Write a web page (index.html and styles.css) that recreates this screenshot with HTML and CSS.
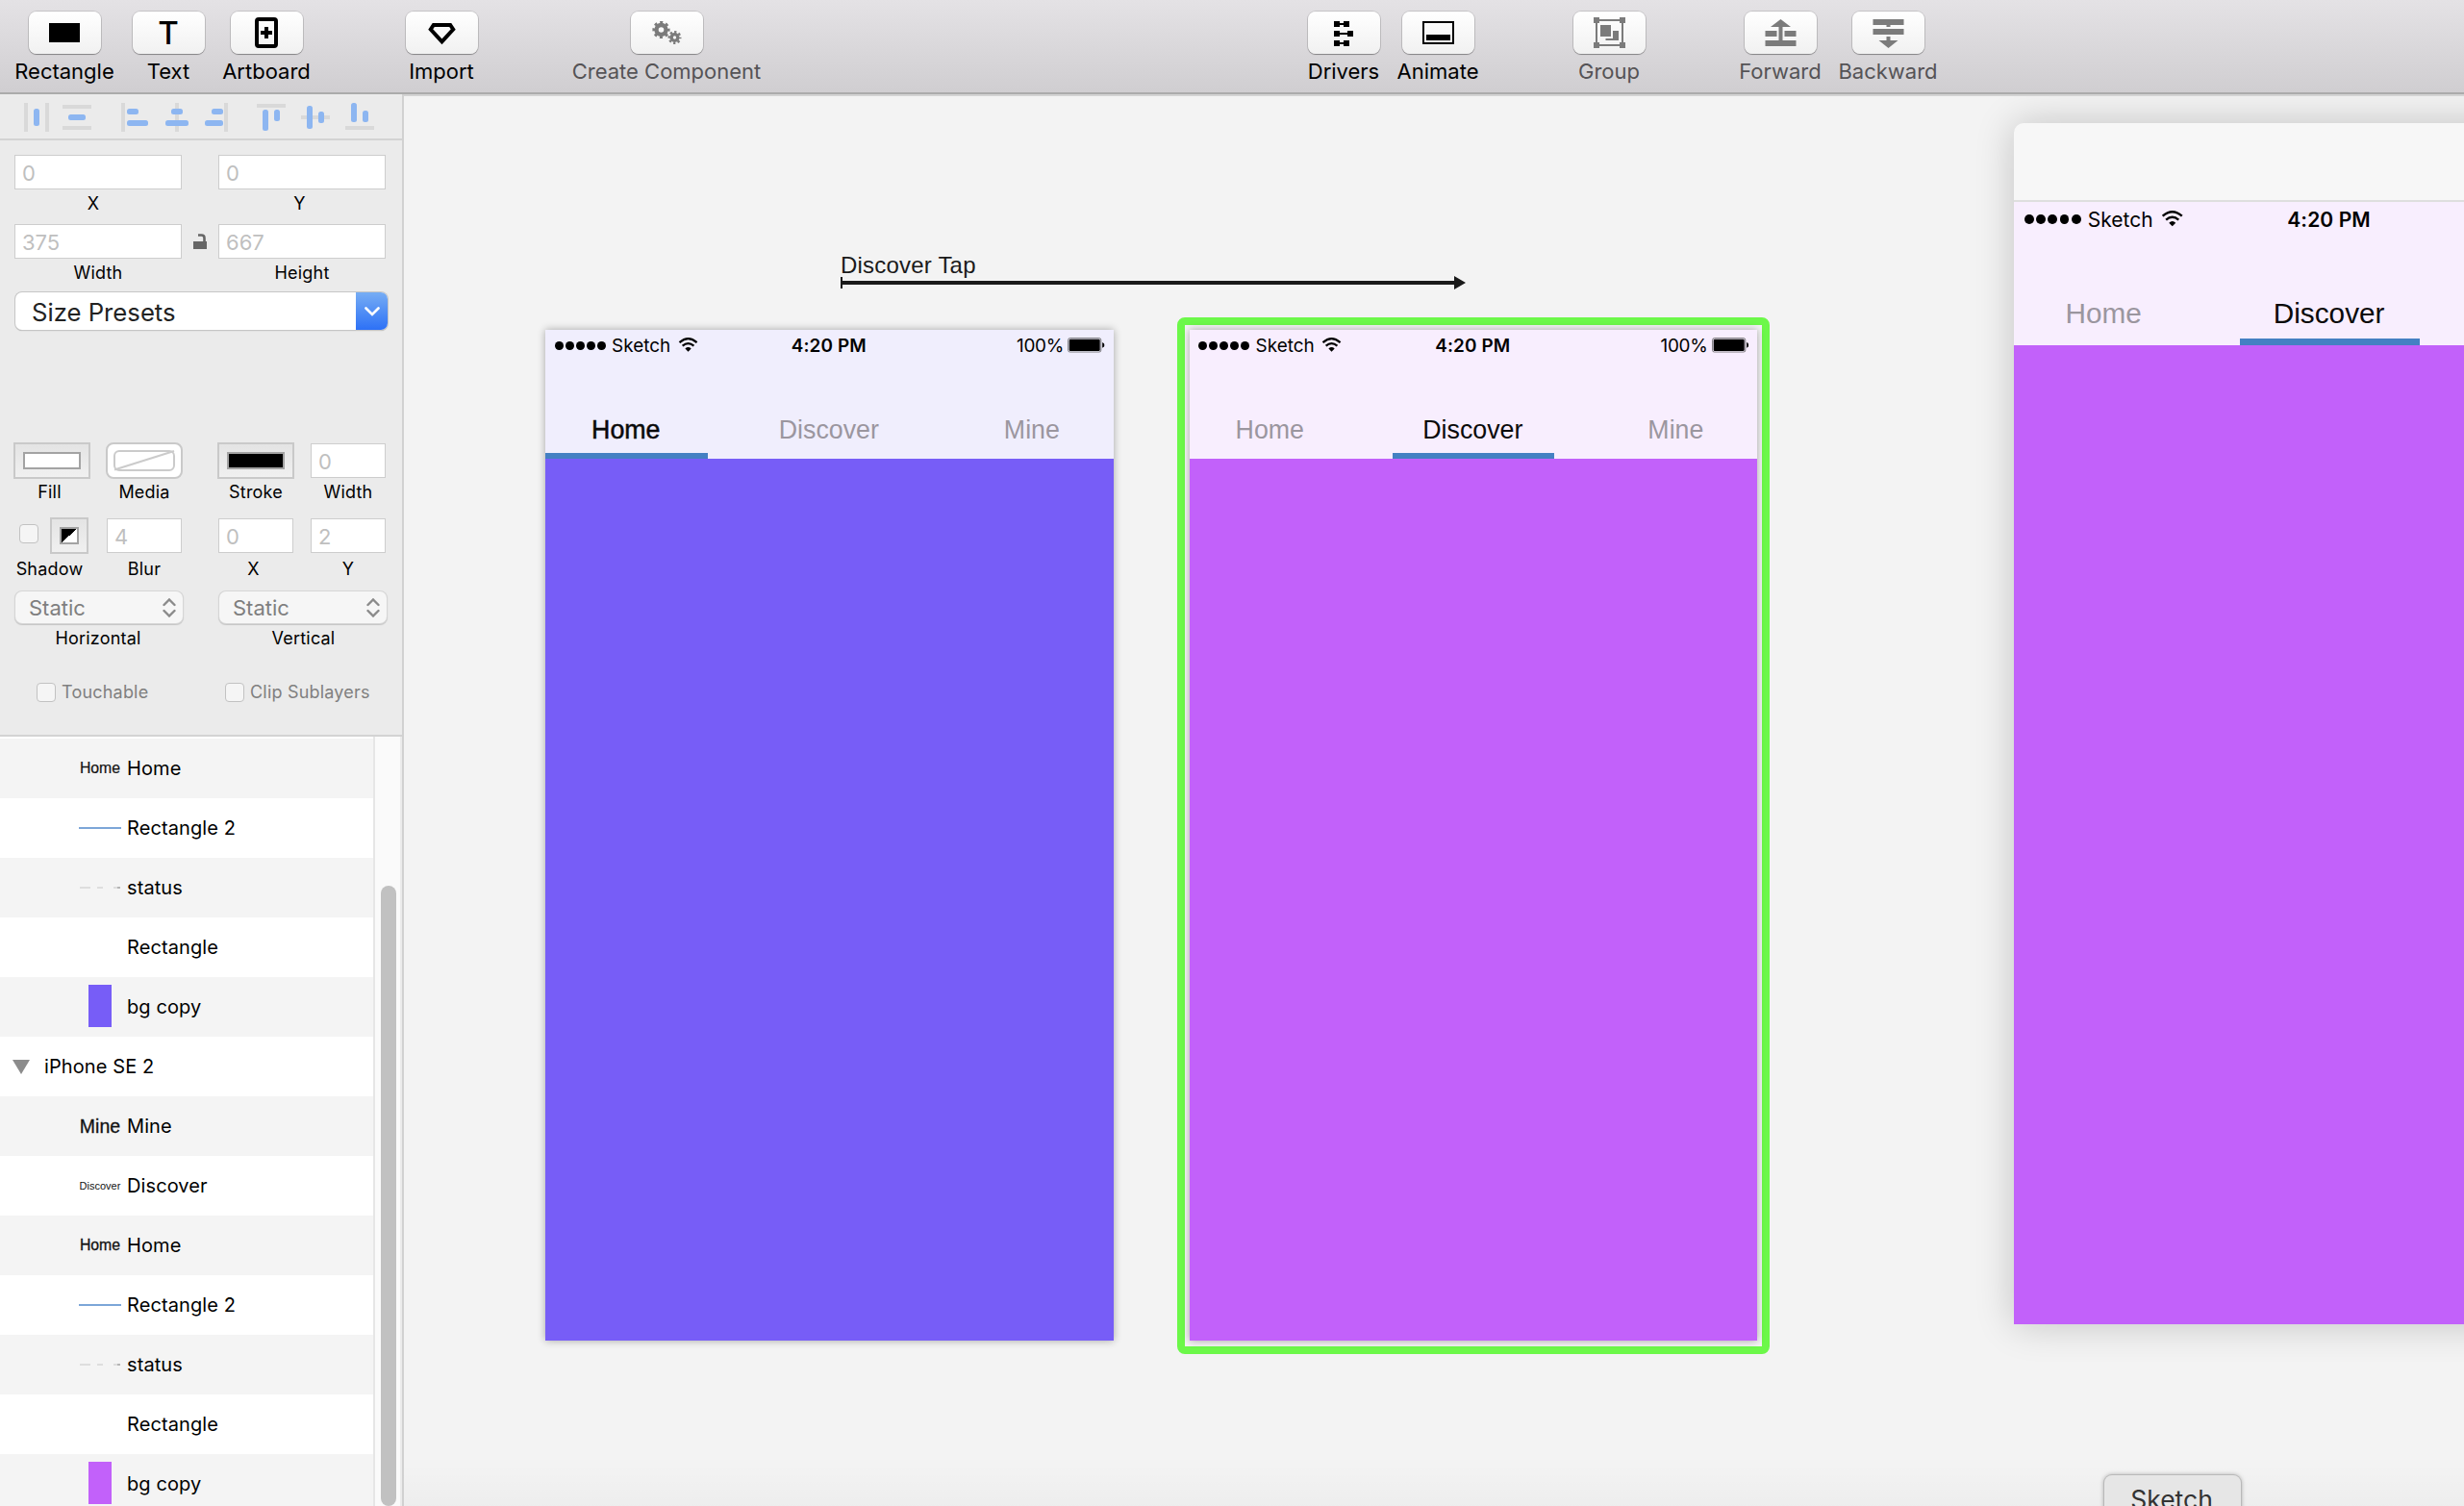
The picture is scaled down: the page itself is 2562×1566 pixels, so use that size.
FILE: index.html
```html
<!DOCTYPE html>
<html lang="en">
<head>
    <meta charset="UTF-8">
    <meta name="viewport" content="width=device-width, initial-scale=1.0">
    <title>Discover Tap</title>
    <link rel="stylesheet" href="styles.css">
</head>
<body>
    <svg width="0" height="0" class="defs">
        <symbol id="wifi" viewBox="0 0 26 19">
            <path d="M1.5 6.5 Q13 -3.5 24.5 6.5" fill="none" stroke="#000" stroke-width="2.8"/>
            <path d="M5.5 11 Q13 4.5 20.5 11" fill="none" stroke="#000" stroke-width="2.8"/>
            <path d="M9 14.5 Q13 10.8 17 14.5 L13 18.6 Z"/>
        </symbol>
        <symbol id="battery" viewBox="0 0 49 20">
            <rect x="0.8" y="0.8" width="43.4" height="18.4" rx="2.5" fill="none" stroke="#555" stroke-width="1"/>
            <rect x="2.2" y="2.2" width="40.6" height="15.6" rx="1.5"/>
            <path d="M46 6.5 Q49 8 49 10 Q49 12 46 13.5 Z"/>
        </symbol>
    </svg>

    <header class="toolbar">
        <div class="tool-group">
            <div class="tool tool-rectangle">
                <button class="tool-btn"><svg viewBox="0 0 75 44"><rect x="21" y="12" width="32" height="20"/></svg></button>
                <span class="tool-label">Rectangle</span>
            </div>
            <div class="tool">
                <button class="tool-btn tool-btn-text">T</button>
                <span class="tool-label">Text</span>
            </div>
            <div class="tool tool-artboard">
                <button class="tool-btn"><svg viewBox="0 0 75 44"><rect x="27" y="8" width="20" height="28" rx="2" fill="none" stroke="#000" stroke-width="4"/><path d="M35 16h4v4h4v4h-4v4h-4v-4h-4v-4h4z"/></svg></button>
                <span class="tool-label">Artboard</span>
            </div>
        </div>
        <div class="tool-group">
            <div class="tool">
                <button class="tool-btn"><svg viewBox="0 0 75 44"><path d="M28.8 14h17.4l3 4.5L37.5 31.3 25.8 18.5z" fill="none" stroke="#000" stroke-width="4"/></svg></button>
                <span class="tool-label">Import</span>
            </div>
        </div>
        <div class="tool-group tool-group-component">
            <div class="tool tool-component disabled">
                <button class="tool-btn">
                    <svg viewBox="0 0 75 44" fill="none" stroke="#7b7b7b">
                        <circle cx="31.5" cy="19" r="5" stroke-width="4.4"/>
                        <circle cx="31.5" cy="19" r="7.7" stroke-width="2.8" stroke-dasharray="3.02" stroke-dashoffset="1.5"/>
                        <circle cx="45.5" cy="27" r="3.4" stroke-width="3.4"/>
                        <circle cx="45.5" cy="27" r="5.8" stroke-width="2.4" stroke-dasharray="2.28" stroke-dashoffset="1.1"/>
                    </svg>
                </button>
                <span class="tool-label">Create Component</span>
            </div>
        </div>
        <div class="tool-group tool-group-right">
            <div class="tool">
                <button class="tool-btn"><svg viewBox="0 0 75 44"><path d="M27 10h6v6h-6zM37 10h6v6h-6zM33 12h4v2h-4zM27 20h6v6h-6zM41 20h6v6h-6zM33 22h8v2h-8zM27 30h6v6h-6zM37 30h6v6h-6zM33 32h4v2h-4z"/></svg></button>
                <span class="tool-label">Drivers</span>
            </div>
            <div class="tool tool-animate">
                <button class="tool-btn"><svg viewBox="0 0 75 44"><rect x="22" y="11" width="31" height="22" fill="none" stroke="#000" stroke-width="2"/><rect x="25" y="24" width="25" height="6"/></svg></button>
                <span class="tool-label">Animate</span>
            </div>
        </div>
        <div class="tool-group">
            <div class="tool disabled">
                <button class="tool-btn"><svg viewBox="0 0 75 44" fill="#7b7b7b"><path d="M21 6h6v6h-6zM48 6h6v6h-6zM21 32h6v6h-6zM48 32h6v6h-6zM27 8h21v2H27zM27 34h21v2H27zM23 12h2v20h-2zM50 12h2v20h-2zM28 14h11v12H28zM41 20h6v10H33.5v-2H41z"/></svg></button>
                <span class="tool-label">Group</span>
            </div>
        </div>
        <div class="tool-group">
            <div class="tool tool-animate disabled">
                <button class="tool-btn"><svg viewBox="0 0 75 44" fill="#7b7b7b"><path d="M37.5 8L48 16h-8.500v14h14v6h-32v-6h14V16H27zM21.500 20h12v6h-12zM41.500 20h12v6h-12z"/></svg></button>
                <span class="tool-label">Forward</span>
            </div>
            <div class="tool tool-rectangle disabled">
                <button class="tool-btn"><svg viewBox="0 0 75 44" fill="#7b7b7b"><path d="M21.500 8h32v6h-14v2h-4v-2h-14zM21.500 18h32v6h-32zM35.500 26h4v4h8l-10 8-10-8h8z"/></svg></button>
                <span class="tool-label">Backward</span>
            </div>
        </div>
    </header>

    <main class="workspace">
        <aside class="sidebar">
            <div class="align-bar">
                <svg width="418" height="46" viewBox="0 98 418 46">
                    <path fill="#d9d9d9" d="M25 107h4v30h-4zM47 107h4v30h-4zM65 109h30v4H65zM65 131h30v4H65zM126 107h4v30h-4zM182 107h4v30h-4zM233 107h4v30h-4zM267 108h30v4h-30zM313 120h30v4h-30zM359 131h30v4h-30z"/>
                    <g fill="#8db6f1">
                        <rect x="35" y="113" width="6" height="18" rx="2.5"/>
                        <rect x="71" y="119" width="18" height="6" rx="2.5"/>
                        <rect x="132" y="113" width="12" height="6" rx="2.5"/>
                        <rect x="132" y="125" width="22" height="6" rx="2.5"/>
                        <rect x="178" y="113" width="12" height="6" rx="2.5"/>
                        <rect x="172" y="125" width="24" height="6" rx="2.5"/>
                        <rect x="220" y="113" width="12" height="6" rx="2.5"/>
                        <rect x="213" y="125" width="19" height="6" rx="2.5"/>
                        <rect x="273" y="114" width="6" height="22" rx="2.5"/>
                        <rect x="285" y="114" width="6" height="12" rx="2.5"/>
                        <rect x="319" y="110" width="6" height="24" rx="2.5"/>
                        <rect x="331" y="116" width="6" height="12" rx="2.5"/>
                        <rect x="365" y="107" width="6" height="20" rx="2.5"/>
                        <rect x="377" y="115" width="6" height="12" rx="2.5"/>
                    </g>
                </svg>
            </div>

            <div class="inspector">
                <div class="row row-position">
                    <div class="col col-wide"><div class="field">0</div><span class="label label-x">X</span></div>
                    <div class="col col-wide"><div class="field">0</div><span class="label label-fill">Y</span></div>
                </div>
                <div class="row row-size">
                    <div class="col col-wide"><div class="field">375</div><span class="label">Width</span></div>
                    <svg class="lock" width="14" height="16" viewBox="0 0 14 16"><rect y="8" width="14" height="8" fill="#666"/><path d="M5 1.5h3.500q3 0 3 3V8" fill="none" stroke="#666" stroke-width="2.6"/></svg>
                    <div class="col col-wide"><div class="field">667</div><span class="label">Height</span></div>
                </div>
                <div class="combo">
                    <span class="combo-text">Size Presets</span>
                    <span class="combo-btn"><svg width="16" height="10" viewBox="0 0 16 10"><path d="M1.5 1.5L8 8l6.500-6.500" fill="none" stroke="#fff" stroke-width="2.6" stroke-linecap="round"/></svg></span>
                </div>
                <div class="row row-fill">
                    <div class="pair">
                        <div class="col"><div class="well"><span class="swatch"></span></div><span class="label label-fill">Fill</span></div>
                        <div class="col">
                            <div class="well well-media"><svg width="64" height="22" viewBox="0 0 64 22"><rect x="1" y="1" width="62" height="20" rx="5" fill="#fff" stroke="#cbcbcb" stroke-width="2"/><path d="M1 20.500L63 1" stroke="#cbcbcb" stroke-width="2"/></svg></div>
                            <span class="label">Media</span>
                        </div>
                    </div>
                    <div class="pair">
                        <div class="col"><div class="well"><span class="swatch swatch-black"></span></div><span class="label">Stroke</span></div>
                        <div class="col"><div class="field field-small">0</div><span class="label">Width</span></div>
                    </div>
                </div>
                <div class="row row-shadow">
                    <div class="pair">
                        <div class="col">
                            <div class="shadow-controls">
                                <span class="checkbox"></span>
                                <div class="well well-small"><span class="swatch swatch-split"></span></div>
                            </div>
                            <span class="label label-fill">Shadow</span>
                        </div>
                        <div class="col"><div class="field field-small">4</div><span class="label">Blur</span></div>
                    </div>
                    <div class="pair">
                        <div class="col"><div class="field field-small">0</div><span class="label label-fill">X</span></div>
                        <div class="col"><div class="field field-small">2</div><span class="label">Y</span></div>
                    </div>
                </div>
                <div class="row row-layout">
                    <div class="col col-wide">
                        <div class="select">Static<svg width="14" height="20" viewBox="0 0 14 20"><path d="M1.5 7L7 1.5 12.5 7M1.5 13L7 18.5 12.5 13" fill="none" stroke="#8a8a8a" stroke-width="2.4" stroke-linecap="round"/></svg></div>
                        <span class="label">Horizontal</span>
                    </div>
                    <div class="col col-wide">
                        <div class="select">Static<svg width="14" height="20" viewBox="0 0 14 20"><path d="M1.5 7L7 1.5 12.5 7M1.5 13L7 18.5 12.5 13" fill="none" stroke="#8a8a8a" stroke-width="2.4" stroke-linecap="round"/></svg></div>
                        <span class="label label-vertical">Vertical</span>
                    </div>
                </div>
                <div class="checks">
                    <div class="check check-touch"><span class="checkbox"></span><span>Touchable</span></div>
                    <div class="check"><span class="checkbox"></span><span>Clip Sublayers</span></div>
                </div>
            </div>

            <div class="layers">
                <ul class="layer-list">
                    <li class="layer"><span class="thumb thumb-home">Home</span>Home</li>
                    <li class="layer"><span class="thumb"><i class="thumb-line"></i></span>Rectangle 2</li>
                    <li class="layer"><span class="thumb"><i class="thumb-status"></i></span>status</li>
                    <li class="layer"><span class="thumb"></span>Rectangle</li>
                    <li class="layer"><span class="thumb"><i class="thumb-bg"></i></span>bg copy</li>
                    <li class="layer layer-parent"><i class="triangle"></i>iPhone SE 2</li>
                    <li class="layer"><span class="thumb thumb-mine">Mine</span>Mine</li>
                    <li class="layer"><span class="thumb thumb-discover">Discover</span>Discover</li>
                    <li class="layer"><span class="thumb thumb-home thumb-bold">Home</span>Home</li>
                    <li class="layer"><span class="thumb"><i class="thumb-line"></i></span>Rectangle 2</li>
                    <li class="layer"><span class="thumb"><i class="thumb-status"></i></span>status</li>
                    <li class="layer"><span class="thumb"></span>Rectangle</li>
                    <li class="layer"><span class="thumb"><i class="thumb-bg thumb-bg-pink"></i></span>bg copy</li>
                </ul>
                <div class="scrollbar"><div class="scroll-thumb"></div></div>
            </div>
        </aside>

        <section class="canvas">
            <div class="driver">
                <span class="driver-name">Discover Tap</span>
                <svg width="650" height="14" viewBox="0 0 650 14"><path d="M0 1h2v12H0zM2 5h636v4H2zM638 0l12 7-12 7z" fill="#1a1a1a"/></svg>
            </div>

            <div class="phone phone-home">
                <div class="phone-head">
                    <div class="status">
                        <div class="carrier"><i></i><i></i><i></i><i></i><i></i><span>Sketch</span><svg class="wifi"><use href="#wifi"/></svg></div>
                        <div class="time">4:20 PM</div>
                        <div class="power"><span>100%</span><svg class="battery"><use href="#battery"/></svg></div>
                    </div>
                    <div class="tabs">
                        <div class="tab active medium">Home</div>
                        <div class="tab">Discover</div>
                        <div class="tab">Mine</div>
                    </div>
                </div>
            </div>

            <div class="selection"></div>
            <div class="phone phone-discover">
                <div class="phone-head">
                    <div class="status">
                        <div class="carrier"><i></i><i></i><i></i><i></i><i></i><span>Sketch</span><svg class="wifi"><use href="#wifi"/></svg></div>
                        <div class="time">4:20 PM</div>
                        <div class="power"><span>100%</span><svg class="battery"><use href="#battery"/></svg></div>
                    </div>
                    <div class="tabs">
                        <div class="tab">Home</div>
                        <div class="tab active">Discover</div>
                        <div class="tab">Mine</div>
                    </div>
                </div>
            </div>

            <div class="preview">
                <div class="preview-title"></div>
                <div class="phone phone-preview">
                    <div class="phone-head">
                        <div class="status">
                            <div class="carrier"><i></i><i></i><i></i><i></i><i></i><span>Sketch</span><svg class="wifi"><use href="#wifi"/></svg></div>
                            <div class="time">4:20 PM</div>
                            <div class="power"></div>
                        </div>
                        <div class="tabs">
                            <div class="tab">Home</div>
                            <div class="tab active">Discover</div>
                            <div class="tab"></div>
                        </div>
                    </div>
                </div>
            </div>

            <div class="dock-shade"></div>
            <div class="dock-tip">Sketch</div>
        </section>
    </main>
</body>
</html>
```

FILE: styles.css
```css
* {
    box-sizing: border-box;
}

body {
    margin: 0;
    width: 2562px;
    height: 1566px;
    overflow: hidden;
    font-family: Inter, "Liberation Sans", sans-serif;
    color: #000;
    background: #f3f3f3;
}

.defs {
    position: absolute;
}

i {
    font-style: normal;
}

/* toolbar */
.toolbar {
    display: flex;
    gap: 98px;
    height: 98px;
    padding: 12px 0 0 15px;
    background: linear-gradient(#e4e2e5, #d0ced1);
    border-bottom: 2px solid #ababab;
}

.tool-group {
    display: flex;
    gap: 18px;
}

.tool-group-component {
    margin-left: -1px;
}

.tool-group-right {
    margin-left: 469px;
}

.tool {
    display: flex;
    flex-direction: column;
    align-items: center;
    width: 76px;
}

.tool-rectangle {
    width: 104px;
}

.tool-artboard {
    width: 92px;
}

.tool-animate {
    width: 84px;
}

.tool-component {
    width: 198px;
}

.tool-btn {
    width: 75px;
    height: 44px;
    padding: 0;
    border: none;
    border-radius: 8px;
    background: linear-gradient(#fff, #f1f1f1);
    box-shadow: 0 0 0 1px rgba(0, 0, 0, 0.12), 0 1px 1px rgba(0, 0, 0, 0.3);
}

.tool-btn svg {
    display: block;
    width: 75px;
    height: 44px;
}

.tool-btn-text {
    font: 500 33px/44px Inter, sans-serif;
    color: #000;
}

.tool-label {
    margin-top: 5px;
    font-size: 22px;
    line-height: 26px;
    white-space: nowrap;
}

.disabled .tool-label {
    color: #555356;
}

/* layout */
.workspace {
    display: flex;
    height: 1468px;
}

.sidebar {
    display: flex;
    flex-direction: column;
    width: 420px;
    border-right: 2px solid #d1d1d1;
    background: #ebebeb;
}

.align-bar {
    height: 48px;
    border-bottom: 2px solid #d3d3d3;
}

.align-bar svg {
    display: block;
}

/* inspector */
.inspector {
    height: 620px;
    padding: 15px 16px 0 14px;
    border-bottom: 2px solid #d3d3d3;
}

.row {
    position: relative;
    display: flex;
    gap: 36px;
}

.row-position {
    height: 72px;
}

.row-size {
    height: 71px;
}

.row-fill {
    height: 78px;
}

.row-shadow {
    height: 77px;
}

.row-layout {
    height: 94px;
}

.pair {
    display: flex;
    gap: 16px;
}

.col {
    display: flex;
    flex-direction: column;
    align-items: center;
    width: 80px;
}

.col-wide {
    width: 176px;
}

.field {
    width: 174px;
    height: 36px;
    padding-left: 7px;
    border: 1px solid #cdcdcd;
    background: #fff;
    color: #bfbfbf;
    font-size: 22px;
    line-height: 36px;
}

.field-small {
    width: 78px;
    margin: 1px 0;
}

.label {
    margin-top: 4px;
    font-size: 18px;
    line-height: 22px;
    letter-spacing: 0.2px;
}

.row-fill .label {
    margin-top: 3px;
}

.row-shadow .label,
.row-layout .label {
    margin-top: 5px;
}

.label-x {
    padding-right: 10px;
}

.label-fill {
    padding-right: 5px;
}

.label-vertical {
    padding-left: 3px;
}

.lock {
    position: absolute;
    left: 187px;
    top: 10px;
}

.combo {
    display: flex;
    justify-content: space-between;
    width: 387px;
    height: 39px;
    margin: 0 0 117px 2px;
    border-radius: 7px;
    background: #fff;
    overflow: hidden;
    box-shadow: 0 0 0 1px #c6c6c6, 0 1px 1px 0 #999;
}

.combo-text {
    padding-left: 17px;
    font-size: 25.7px;
    line-height: 41px;
    color: #222;
}

.combo-btn {
    display: flex;
    align-items: center;
    justify-content: center;
    width: 33px;
    background: linear-gradient(#77adf4, #2d71f6);
}

.well {
    display: flex;
    align-items: center;
    justify-content: center;
    width: 80px;
    height: 38px;
    border: 2px solid #c9c9c9;
    background: linear-gradient(#e4e4e4, #f0f0f0);
}

.well-media {
    border-radius: 8px;
    background: #fff;
}

.well-small {
    width: 40px;
}

.swatch {
    width: 60px;
    height: 18px;
    border: 2px solid #a3a3a3;
    background: #fff;
}

.swatch-black {
    background: #000;
}

.swatch-split {
    width: 20px;
    background: linear-gradient(to bottom right, #000 50%, #fff 50%);
}

.shadow-controls {
    display: flex;
    gap: 12px;
    width: 80px;
    padding-left: 6px;
}

.checkbox {
    flex: none;
    width: 20px;
    height: 20px;
    border: 1px solid #c2c2c2;
    border-radius: 4px;
    background: #f5f5f5;
}

.shadow-controls .checkbox {
    margin-top: 7px;
}

.select {
    display: flex;
    justify-content: space-between;
    align-items: center;
    width: 174px;
    height: 33px;
    margin-left: 2px;
    padding: 0 7px 0 14px;
    border-radius: 7px;
    background: #f6f6f6;
    box-shadow: 0 0 0 1px #d6d6d6, 0 1px 1px 1px #c4c4c4;
    color: #7f7f7f;
    font-size: 22px;
}

.checks {
    display: flex;
    padding-left: 24px;
}

.check {
    display: flex;
    align-items: center;
    gap: 6px;
    color: #808080;
    font-size: 18px;
    line-height: 20px;
    letter-spacing: 0.2px;
    white-space: nowrap;
}

.check span:last-child {
    padding-top: 1px;
}

.check-touch {
    width: 196px;
}

/* layers */
.layers {
    display: flex;
    flex: 1;
    overflow: hidden;
}

.layer-list {
    width: 388px;
    margin: 0;
    padding: 2px 0 0;
    list-style: none;
    background: #fff;
}

.layer {
    display: flex;
    align-items: center;
    height: 62px;
    padding-left: 82px;
    font-size: 20px;
    letter-spacing: 0.1px;
}

.layer:nth-child(odd) {
    background: #f4f4f4;
}

.layer-parent {
    padding-left: 13px;
}

.triangle {
    margin-right: 15px;
    border: 9px solid transparent;
    border-top: 15px solid #8c8c8c;
    border-bottom: none;
}

.thumb {
    display: flex;
    justify-content: center;
    width: 44px;
    margin-right: 6px;
    font-family: "Liberation Sans", sans-serif;
    letter-spacing: 0;
    color: #111;
}

.thumb-home {
    font-size: 15.8px;
    -webkit-text-stroke: 0.2px #111;
}

.thumb-bold,
.thumb-mine {
    -webkit-text-stroke: 0.3px #111;
}

.thumb-mine {
    font-size: 19.5px;
}

.thumb-discover {
    font-size: 11px;
}

.thumb-line {
    width: 44px;
    height: 2px;
    background: #7ca6d8;
}

.thumb-status {
    width: 42px;
    height: 2px;
    background: linear-gradient(90deg, #dedede 11px, transparent 11px 18px, #dedede 18px 24px, transparent 24px 35px, #dedede 35px 39px, #b5b5b5 39px);
}

.thumb-bg {
    width: 24px;
    height: 44px;
    margin-top: -2px;
    background: #775df7;
}

.thumb-bg-pink {
    background: #c261fa;
}

.scrollbar {
    width: 30px;
    padding: 155px 0 0 6px;
    border-left: 2px solid #e6e6e6;
    border-right: 2px solid #ebebeb;
    background: #fafafa;
}

.scroll-thumb {
    width: 16px;
    height: 645px;
    border-radius: 8px;
    background: #c1c1c1;
}

/* canvas: artboards sit at free positions */
.canvas {
    position: relative;
    flex: 1;
    border-top: 2px solid #d3d3d3;
    background: #f3f3f3;
    overflow: hidden;
}

.driver {
    position: absolute;
    left: 454px;
    top: 163px;
    font-family: "Liberation Sans", sans-serif;
    font-size: 24px;
    line-height: 25px;
    letter-spacing: 0.2px;
    color: #1a1a1a;
}

.driver svg {
    display: block;
    margin-top: -1px;
}

.driver-name {
    display: block;
}

.phone {
    --pt: 1.575px;
    width: calc(375 * var(--pt));
    height: calc(667 * var(--pt));
    background: #775df7;
    box-shadow: 0 0 8px rgba(0, 0, 0, 0.32);
}

.phone-home,
.phone-discover {
    position: absolute;
    top: 243px;
}

.phone-home {
    left: 147px;
}

.phone-discover {
    left: 816.5px;
}

.phone-discover,
.phone-preview {
    background: #c261fa;
}

.phone-head {
    display: flex;
    flex-direction: column;
    justify-content: space-between;
    height: calc(85 * var(--pt));
    background: #f0eefd;
}

.phone-discover .phone-head,
.phone-preview .phone-head {
    background: #f8eefe;
}

.phone-preview {
    --pt: 1.75px;
    box-shadow: none;
}

.status {
    display: grid;
    grid-template-columns: 1fr auto 1fr;
    align-items: center;
    height: calc(20.6 * var(--pt));
    padding: 0 calc(5.5 * var(--pt)) 0 calc(6.2 * var(--pt));
    font-size: calc(12 * var(--pt));
}

.carrier,
.power {
    display: flex;
    align-items: center;
}

.power {
    justify-content: flex-end;
}

.carrier i {
    width: calc(5.6 * var(--pt));
    height: calc(5.6 * var(--pt));
    margin-right: calc(1.4 * var(--pt));
    border-radius: 50%;
    background: #000;
}

.carrier span {
    width: calc(43.5 * var(--pt));
    margin-left: calc(2.7 * var(--pt));
}

.wifi {
    width: calc(13.4 * var(--pt));
    height: calc(9.5 * var(--pt));
    margin-top: calc(-0.8 * var(--pt));
}

.time {
    margin-left: calc(-1.4 * var(--pt));
    font-weight: 600;
    letter-spacing: 0.1px;
}

.power span {
    letter-spacing: -0.3px;
}

.battery {
    width: calc(24.5 * var(--pt));
    height: calc(10 * var(--pt));
    margin-left: calc(2.8 * var(--pt));
}

.tabs {
    display: flex;
    justify-content: space-between;
    font-family: "Liberation Sans", sans-serif;
    font-size: calc(17 * var(--pt));
    line-height: calc(22.4 * var(--pt));
    color: #9b969f;
}

.tab {
    width: calc(107 * var(--pt));
    height: calc(30 * var(--pt));
    padding-right: 1px;
    border-bottom: calc(4 * var(--pt)) solid transparent;
    text-align: center;
}

.active {
    border-color: #4480c3;
    color: #0a0a0a;
}

.medium {
    -webkit-text-stroke: 0.5px #0a0a0a;
}

.selection {
    position: absolute;
    left: 804px;
    top: 230px;
    width: 616px;
    height: 1078px;
    border: 8px solid #6cf849;
    border-radius: 8px;
}

.preview {
    position: absolute;
    left: 1674px;
    top: 28px;
    border-radius: 10px 10px 0 0;
    background: #f7f7f7;
    box-shadow: 0 0 40px rgba(0, 0, 0, 0.2);
}

.preview-title {
    height: 82px;
    border-bottom: 2px solid #dedede;
}

.dock-shade {
    position: absolute;
    left: 0;
    right: 0;
    bottom: 0;
    height: 44px;
    background: linear-gradient(transparent, rgba(0, 0, 0, 0.025));
}

.dock-tip {
    position: absolute;
    left: 1768px;
    top: 1433.5px;
    width: 142px;
    height: 50px;
    padding-right: 2px;
    border-radius: 8px;
    background: #e6e6e6;
    box-shadow: 0 0 0 1px #b9b9b9, 0 0 5px rgba(0, 0, 0, 0.4);
    color: #333;
    font-size: 26.5px;
    line-height: 51px;
    text-align: center;
}
```
